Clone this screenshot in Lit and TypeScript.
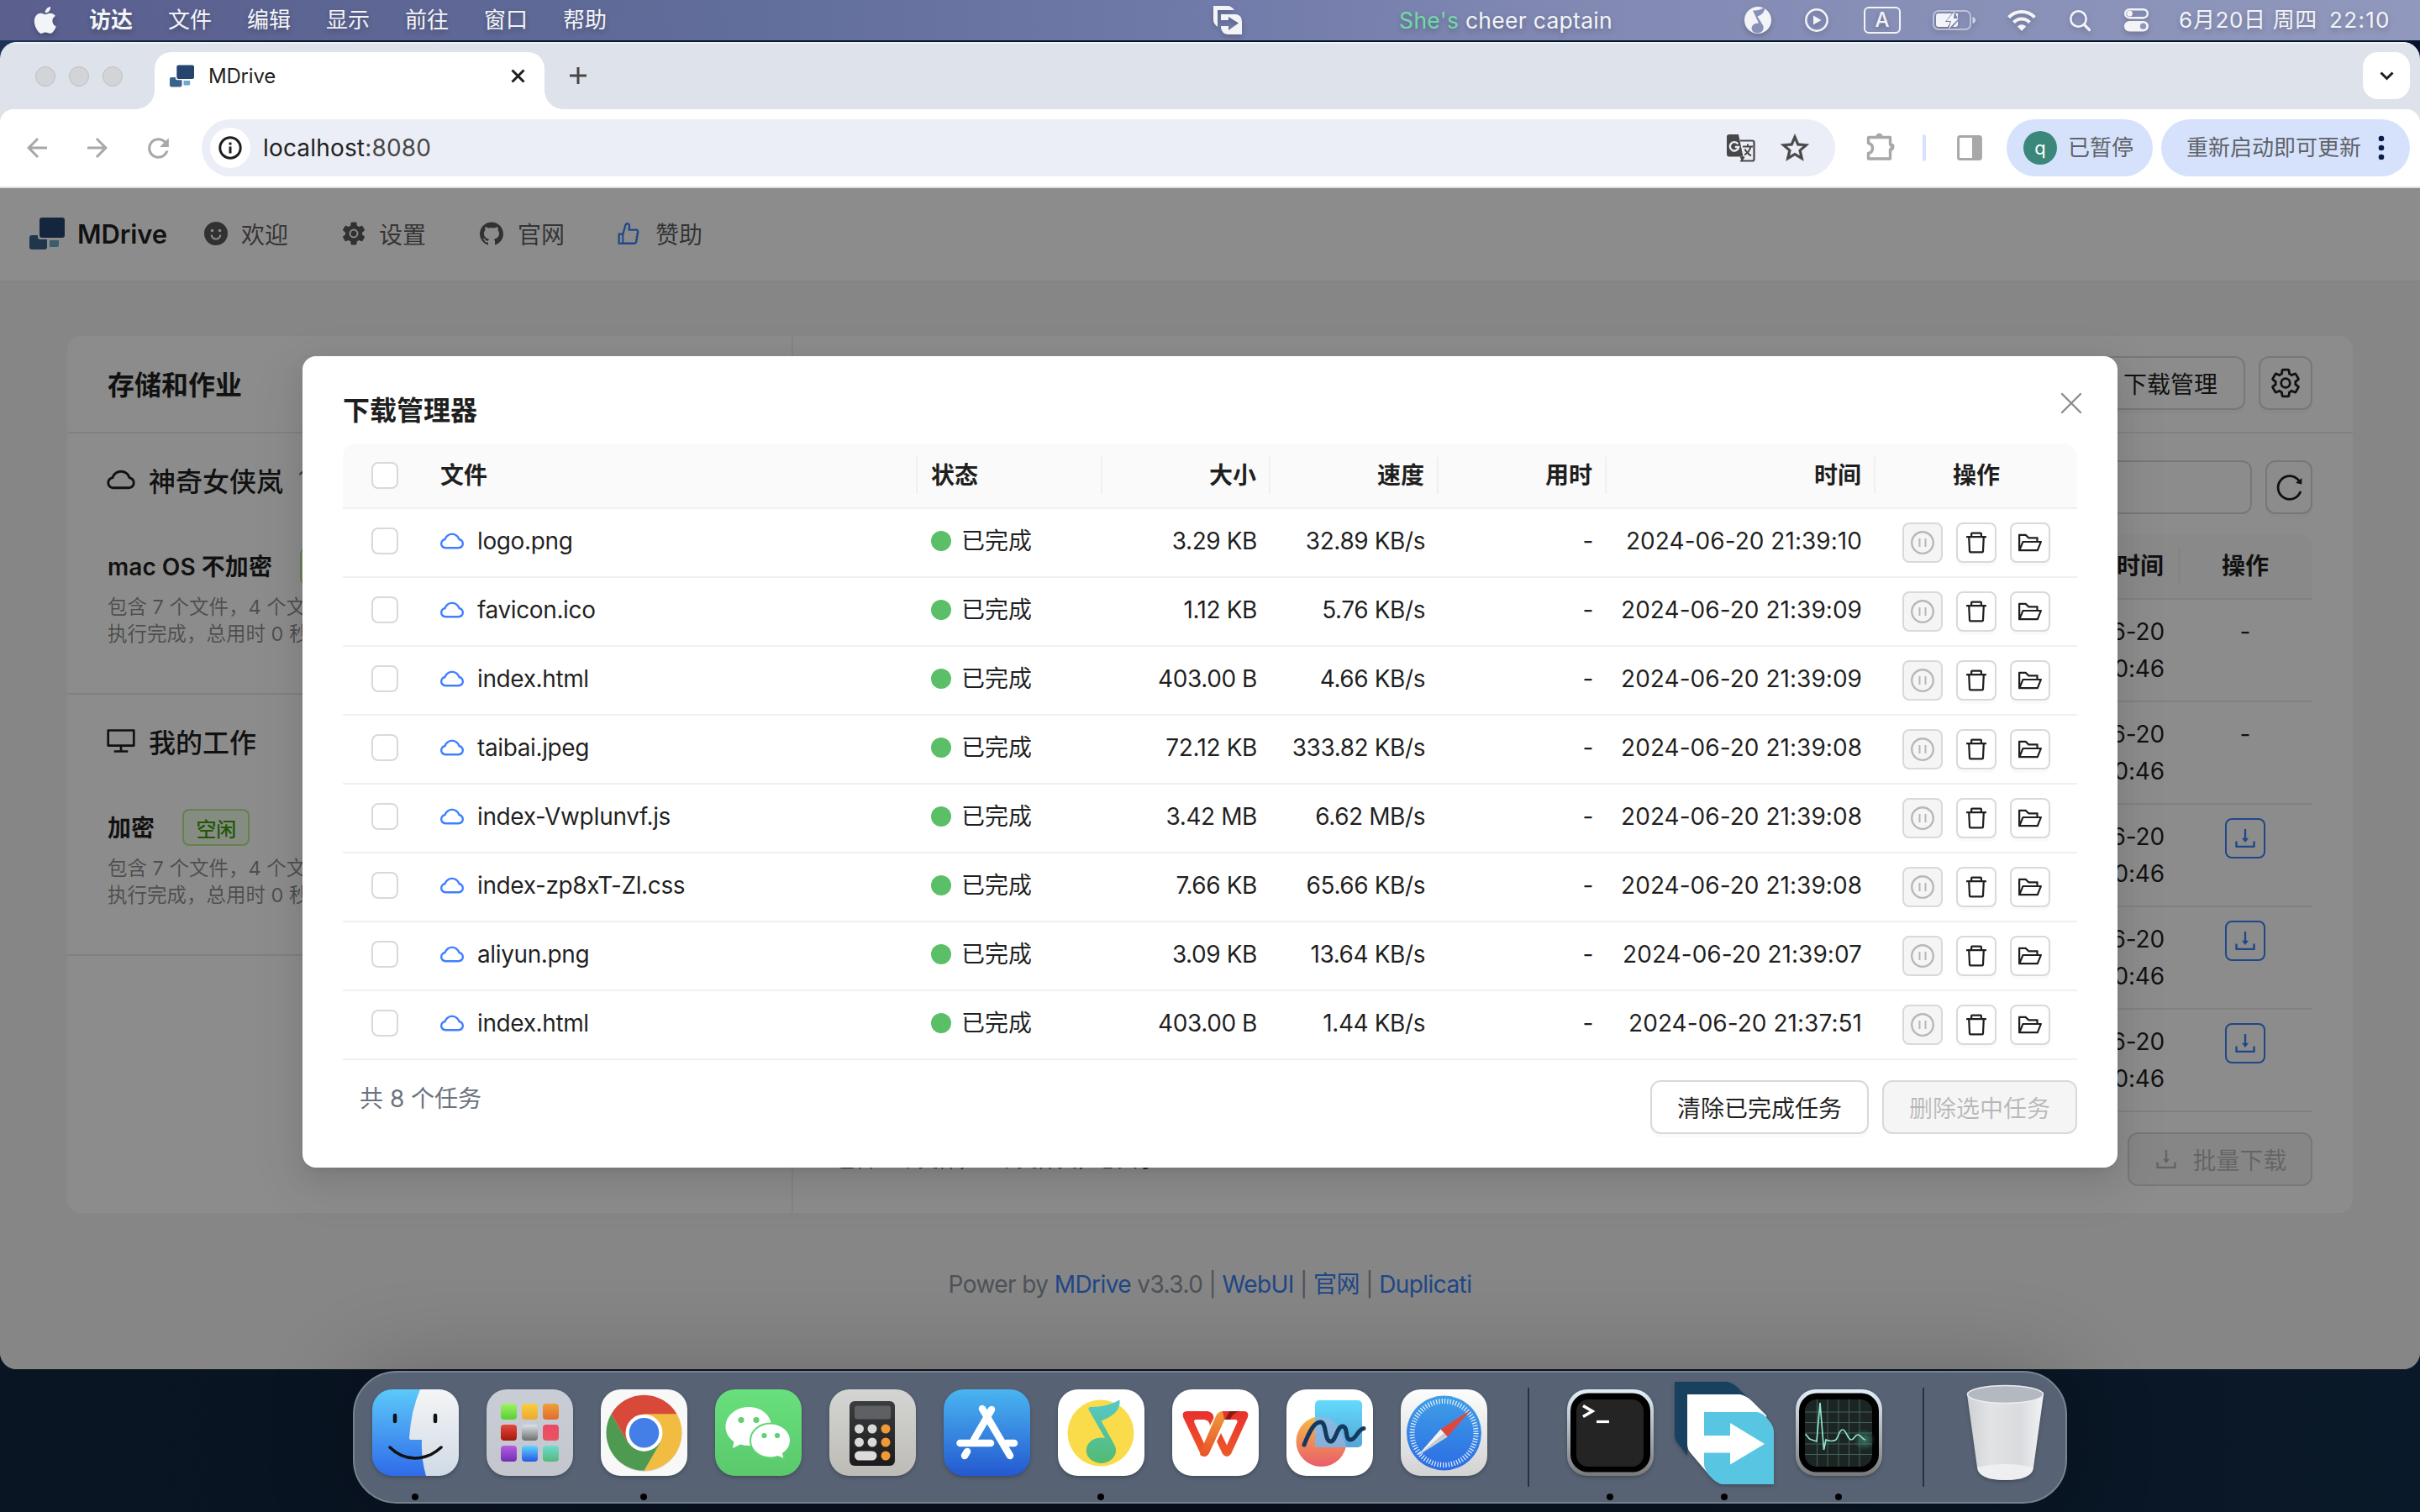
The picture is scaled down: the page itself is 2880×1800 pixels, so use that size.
import { LitElement, html, css, svg, nothing } from "lit";
import { customElement } from "lit/decorators.js";
import { classMap } from "lit/directives/class-map.js";

const base = css`
  * { box-sizing: border-box; }
  :host { display: block; font-family: Inter, "Noto Sans CJK SC", sans-serif; }
  svg { display: block; flex: none; overflow: visible; }
`;

/* Outline icons on a 1024 grid */
const P: Record<string, string> = {
  download: "M505.7 661a8 8 0 0012.6 0l112-141.7c4.1-5.2.4-12.9-6.3-12.9h-74.1V168c0-4.4-3.6-8-8-8h-60c-4.4 0-8 3.6-8 8v338.3H400c-6.7 0-10.4 7.7-6.3 12.9l112 141.8zM878 626h-60c-4.4 0-8 3.6-8 8v154H214V634c0-4.4-3.6-8-8-8h-60c-4.4 0-8 3.6-8 8v198c0 17.7 14.3 32 32 32h684c17.7 0 32-14.3 32-32V634c0-4.4-3.6-8-8-8z",
  trash: "M360 184h-8c4.4 0 8-3.6 8-8v8h304v-8c0 4.4 3.6 8 8 8h-8v72h72v-80c0-35.3-28.7-64-64-64H352c-35.3 0-64 28.7-64 64v80h72v-72zm504 72H160c-17.7 0-32 14.3-32 32v32c0 4.4 3.6 8 8 8h60.4l24.7 523c1.6 34.1 29.8 61 63.9 61h454c34.2 0 62.3-26.8 63.9-61l24.7-523H888c4.4 0 8-3.6 8-8v-32c0-17.7-14.3-32-32-32zM731.3 840H292.7l-24.2-512h487l-24.2 512z",
  folder: "M928 444H820V330.4c0-17.7-14.3-32-32-32H473L355.7 186.2a8.15 8.15 0 00-5.5-2.2H96c-17.7 0-32 14.3-32 32v592c0 17.7 14.3 32 32 32h698c13 0 24.8-7.9 29.7-20l134-332c1.5-3.8 2.3-7.9 2.3-12 0-17.7-14.3-32-32-32zM136 256h188.5l119.6 114.4H748V444H238c-13 0-24.8 7.9-29.7 20L136 643.2V256zm635.3 512H159l103.3-256h612.4L771.3 768z",
  pause: "M512 64C264.6 64 64 264.6 64 512s200.6 448 448 448 448-200.6 448-448S759.4 64 512 64zm0 820c-205.4 0-372-166.6-372-372s166.6-372 372-372 372 166.6 372 372-166.6 372-372 372zm-88-532h-48c-4.4 0-8 3.6-8 8v304c0 4.4 3.6 8 8 8h48c4.4 0 8-3.6 8-8V360c0-4.4-3.6-8-8-8zm224 0h-48c-4.4 0-8 3.6-8 8v304c0 4.4 3.6 8 8 8h48c4.4 0 8-3.6 8-8V360c0-4.4-3.6-8-8-8z",
  reload: "M909.1 209.3l-56.4 44.1C775.8 155.1 656.2 92 521.9 92 290 92 102.3 279.5 102 511.5 101.7 743.7 289.8 932 521.9 932c181.3 0 335.8-115 394.6-276.1 1.5-4.2-.7-8.9-4.9-10.3l-56.7-19.5a8 8 0 00-10.1 4.8c-1.8 5-3.8 10-5.9 14.9-17.3 41-42.1 77.8-73.7 109.4A344.77 344.77 0 01655.9 829c-42.3 17.9-87.4 27-133.8 27-46.5 0-91.5-9.1-133.8-27A341.5 341.5 0 01279 755.2a342.16 342.16 0 01-73.7-109.4c-17.9-42.4-27-87.4-27-133.9s9.1-91.5 27-133.9c17.3-41 42.1-77.8 73.7-109.4 31.6-31.6 68.4-56.4 109.3-73.8 42.3-17.9 87.4-27 133.8-27 46.5 0 91.5 9.1 133.8 27a341.5 341.5 0 01109.3 73.8c9.9 9.9 19.2 20.4 27.8 31.4l-60.2 47a8 8 0 003 14.1l175.6 43c5 1.2 9.9-2.6 9.9-7.7l.8-180.9c-.1-6.6-7.8-10.3-13-6.2z",
  github: "M511.6 76.3C264.3 76.2 64 276.4 64 523.5 64 718.9 189.3 885 363.8 946c23.5 5.9 19.9-10.8 19.9-22.2v-77.5c-135.7 15.9-141.2-73.9-150.3-88.9C215 726 171.5 718 184.5 703c30.9-15.9 62.4 4 98.9 57.9 26.4 39.1 77.9 32.5 104 26 5.7-23.5 17.9-44.5 34.7-60.8-140.6-25.2-199.2-111-199.2-213 0-49.5 16.3-95 48.3-131.7-20.4-60.5 1.9-112.3 4.9-120 58.1-5.2 118.5 41.6 123.2 45.3 33-8.9 70.7-13.6 112.9-13.6 42.4 0 80.2 4.9 113.5 13.9 11.3-8.6 67.3-48.8 121.3-43.9 2.9 7.7 24.7 58.3 5.5 118 32.4 36.8 48.9 82.7 48.9 132.3 0 102.2-59 188.1-200 212.9a127.5 127.5 0 0138.1 91v112.5c.8 9 0 17.9 15 17.9 177.1-59.7 304.6-227 304.6-424.1 0-247.2-200.4-447.3-447.5-447.3z",
  like: "M885.9 533.7c16.8-22.2 26.1-49.4 26.1-77.7 0-44.9-25.1-87.4-65.5-111.1a67.67 67.67 0 00-34.3-9.3H572.4l6-122.9c1.4-29.7-9.1-57.9-29.5-79.4A106.62 106.62 0 00471 99.9c-52 0-98 35-111.8 85.1l-85.9 311H144c-17.7 0-32 14.3-32 32v364c0 17.7 14.3 32 32 32h601.3c9.2 0 18.2-1.8 26.5-5.4 47.6-20.3 78.3-66.8 78.3-118.4 0-12.6-1.8-25-5.4-37 16.8-22.2 26.1-49.4 26.1-77.7 0-12.6-1.8-25-5.4-37 16.8-22.2 26.1-49.4 26.1-77.7-.2-12.6-2-25.1-5.6-37.1zM184 852V568h81v284h-81zm636.4-353l-21.9 19 13.9 25.4a56.2 56.2 0 016.9 27.3c0 16.5-7.2 32.2-19.6 43l-21.9 19 13.9 25.4a56.2 56.2 0 016.9 27.3c0 16.5-7.2 32.2-19.6 43l-21.9 19 13.9 25.4a56.2 56.2 0 016.9 27.3c0 22.4-13.2 42.6-33.6 51.8H329V564.8l99.5-360.5a44.1 44.1 0 0142.2-32.3c7.6 0 15.1 2.2 21.1 6.7 9.9 7.4 15.2 18.6 14.6 30.5l-9.6 198.4h314.4C829 418.5 840 436.9 840 456c0 16.5-7.2 32.1-19.6 43z",
  cloud: "M811.4 418.7C765.6 297.9 648.9 212 512.2 212S258.8 297.8 213 418.6C127.3 441.1 64 519.1 64 612c0 110.5 89.5 200 199.9 200h496.2C870.5 812 960 722.5 960 612c0-92.7-63.1-170.7-148.6-193.3zm36.3 281a123.07 123.07 0 01-87.6 36.3H263.9c-33.1 0-64.2-12.9-87.6-36.3A123.3 123.3 0 01140 612c0-28 9.1-54.3 26.2-76.3a125.7 125.7 0 0166.1-43.7l37.9-9.9 13.9-36.6c8.6-22.8 20.6-44.1 35.7-63.4a245.6 245.6 0 0152.4-49.9c41.1-28.9 89.5-44.2 140-44.2s98.9 15.3 140 44.2c19.9 14 37.5 30.8 52.4 49.9 15.1 19.3 27.1 40.7 35.7 63.4l13.8 36.5 37.8 10c54.3 14.5 92.1 63.8 92.1 120 0 33.1-12.9 64.3-36.3 87.7z",
  desktop: "M928 140H96c-17.7 0-32 14.3-32 32v496c0 17.7 14.3 32 32 32h380v112H304c-8.8 0-16 7.2-16 16v48c0 4.4 3.6 8 8 8h432c4.4 0 8-3.6 8-8v-48c0-8.8-7.2-16-16-16H548V700h380c17.7 0 32-14.3 32-32V172c0-17.7-14.3-32-32-32zm-40 488H136V212h752v416z",
};
const ant = (name: string, size: number) =>
  html`<svg width=${size} height=${size} viewBox="0 0 1024 1024" fill="currentColor"><path d=${P[name]}></path></svg>`;

const GEAR = "M19.14 12.94c.04-.3.06-.61.06-.94 0-.32-.02-.64-.07-.94l2.03-1.58c.18-.14.23-.41.12-.61l-1.92-3.32c-.12-.22-.37-.29-.59-.22l-2.39.96c-.5-.38-1.03-.7-1.62-.94l-.36-2.54c-.04-.24-.24-.41-.48-.41h-3.84c-.24 0-.43.17-.47.41l-.36 2.54c-.59.24-1.13.57-1.62.94l-2.39-.96c-.22-.08-.47 0-.59.22L2.74 8.87c-.12.21-.08.47.12.61l2.03 1.58c-.05.3-.09.63-.09.94s.02.64.07.94l-2.03 1.58c-.18.14-.23.41-.12.61l1.92 3.32c.12.22.37.29.59.22l2.39-.96c.5.38 1.03.7 1.62.94l.36 2.54c.05.24.24.41.48.41h3.84c.24 0 .44-.17.47-.41l.36-2.54c.59-.24 1.13-.56 1.62-.94l2.39.96c.22.08.47 0 .59-.22l1.92-3.32c.12-.22.07-.47-.12-.61l-2.01-1.58z";

const logo = (w: number, h: number) => html`
  <svg width=${w} height=${h} viewBox="0 0 42 38">
    <rect x="12" y="0" width="30" height="24" rx="3" fill="#25456f"></rect>
    <path d="M0 24a3 3 0 0 1 3-3h7v2a3 3 0 0 0 3 3h8v9a3 3 0 0 1-3 3H3a3 3 0 0 1-3-3z" fill="#3a638c"></path>
    <path d="M24 27h11v6a2 2 0 0 1-2 2h-9z" fill="#6fa8cc"></path>
  </svg>`;

@customElement("menu-bar")
class MenuBar extends LitElement {
  static styles = [base, css`
    .bar {
      height: 48px; display: flex; align-items: center; padding: 0 0 0 40px; color: #f3f4f8; font-size: 26px; white-space: nowrap;
      background: linear-gradient(90deg, #5a5f8e, #616d9a 31%, #707aa8 49%, #828ab4 66%, #9198bd);
      text-shadow: 0 3px 6px rgba(0, 0, 0, .25); line-height: 40px;
    }
    svg { filter: drop-shadow(0 3px 3px rgba(0, 0, 0, .2)); }
    .menus { display: flex; gap: 42px; margin-left: 39px; }
    .menus b { font-weight: 700; }
    .lyric { margin-left: 187px; width: 254px; font-size: 26.5px; letter-spacing: .28px; }
    .lyric i { font-style: normal; color: #6fdca6; }
    .right { display: flex; align-items: center; margin-left: 157px; }
    .push { margin-left: 722px; }
    .letter { width: 44px; height: 32px; border: 2.5px solid #f3f4f8; border-radius: 6px; display: grid; place-items: center; font-size: 24px; font-weight: 500; line-height: 1; margin: 0 38px 0 42px; }
    .date { margin-left: 36px; width: 179px; letter-spacing: .65px; }
    .time { letter-spacing: 1.3px; }
  `];
  render() {
    return html`<div class="bar">
      <svg width="27" height="32" viewBox="1.6 0 20.4 24" fill="currentColor"><path d="M12.152 6.896c-.948 0-2.415-1.078-3.96-1.04-2.04.027-3.91 1.183-4.961 3.014-2.117 3.675-.546 9.103 1.519 12.09 1.013 1.454 2.208 3.09 3.792 3.039 1.52-.065 2.09-.987 3.935-.987 1.831 0 2.35.987 3.96.948 1.637-.026 2.676-1.48 3.676-2.948 1.156-1.688 1.636-3.325 1.662-3.415-.039-.013-3.182-1.221-3.22-4.857-.026-3.04 2.48-4.494 2.597-4.559-1.429-2.09-3.623-2.324-4.39-2.376-2-.156-3.675 1.09-4.61 1.09zM15.53 3.83c.843-1.012 1.4-2.427 1.245-3.83-1.207.052-2.662.805-3.532 1.818-.78.896-1.454 2.338-1.273 3.714 1.338.104 2.715-.688 3.559-1.701"></path></svg>
      <div class="menus"><b>访达</b>${["文件", "编辑", "显示", "前往", "窗口", "帮助"].map(t => html`<span>${t}</span>`)}</div>
      <svg class="push" width="34" height="34" viewBox="0 0 34 34" fill="currentColor">
        <path d="M0 0H17Q21 0 25 5H5V25Q0 21 0 17Z"></path>
        <path fill-rule="evenodd" d="M9 10H27Q34 11 34 19V34H17Q10 33 9 26V24H18V29L30 20.500 18 13V17H9Z"></path>
      </svg>
      <span class="lyric"><i>She's </i>cheer captain</span>
      <div class="right">
        <svg width="32" height="32" viewBox="0 0 32 32"><circle cx="16" cy="16" r="16" fill="#f3f4f8"></circle><path d="M10 4.500Q18 5 24 0.500 25 8 15.500 11.500L22.500 23Q24 30 16 31.500 8.500 31 8.500 25.500 9 19.500 17 19.500Z" fill="#8790b8"></path></svg>
        <svg width="28" height="28" viewBox="0 0 28 28" style="margin-left:40px"><circle cx="14" cy="14" r="12.700" fill="none" stroke="#f3f4f8" stroke-width="2.500"></circle><path d="M10 8.500v11l9.500-5.500z" fill="#f3f4f8"></path></svg>
        <span class="letter">A</span>
        <svg width="51" height="24" viewBox="0 0 51 24"><rect x="1" y="1" width="44" height="22" rx="6" fill="none" stroke="#d0d4e4" stroke-width="2" opacity=".75"></rect><path d="M47.500 8q3.500 1 3.500 4t-3.500 4z" fill="#d0d4e4"></path><path d="M7 4h16L15 14h6l-3 6H7q-3 0-3-3V7q0-3 3-3zM27 4h3v6zM24 20h3q3 0 3-3v-4z" fill="#f3f4f8"></path><path d="M26 1.500 16.500 13h5.500l-3 9.500L31 10h-6z" fill="#f3f4f8"></path></svg>
        <svg width="34" height="26" viewBox="0 0 34 26" style="margin-left:38px" fill="none" stroke="#f3f4f8" stroke-width="4.200"><path d="M1.600 9.600Q8 3 17 3t15.400 6.600"></path><path d="M7.500 15.600Q11.500 11.500 17 11.500t9.500 4.100"></path><path d="M17 26l-5.200-5.500q5.200-4.600 10.400 0z" fill="#f3f4f8" stroke="none"></path></svg>
        <svg width="25" height="25" viewBox="0 0 25 25" style="margin-left:40px" fill="none" stroke="#f3f4f8" stroke-width="2.600" stroke-linecap="round"><circle cx="10.500" cy="10.500" r="9.200"></circle><path d="M17.500 17.500l6 6" stroke-width="3.200"></path></svg>
        <svg width="29" height="28" viewBox="0 0 29 28" style="margin-left:40px"><rect x="1.200" y="1.200" width="26.600" height="10" rx="5" fill="none" stroke="#f3f4f8" stroke-width="2.400"></rect><circle cx="6.500" cy="6.200" r="3.400" fill="#f3f4f8"></circle><rect x="0" y="15" width="29" height="12.500" rx="6.200" fill="#f3f4f8"></rect><circle cx="22.500" cy="21.200" r="3.600" fill="#8f96bb"></circle></svg>
        <span class="date">6月20日 周四</span><span class="time">22:10</span>
      </div>
    </div>`;
  }
}

@customElement("browser-chrome")
class BrowserChrome extends LitElement {
  static styles = [base, css`
    .strip { height: 80px; background: #dee2ea; border-top: 2px solid #eef1f5; padding: 10px 12px 0 42px; display: flex; }
    .lights { display: flex; gap: 16px; margin-top: 17px; }
    .lights i { width: 24px; height: 24px; border-radius: 50%; background: #d2d4d7; border: 1px solid #bdbfc2; }
    .tab { position: relative; margin-left: 38px; width: 464px; height: 68px; border-radius: 20px 20px 0 0; background: #fff; display: flex; align-items: center; padding: 0 23px 11px 18px; color: #1f1f1f; font-size: 24px; }
    .tab::before, .tab::after { content: ""; position: absolute; bottom: 0; width: 22px; height: 22px; }
    .tab::before { left: -22px; background: radial-gradient(circle at 0 0, transparent 21.5px, #fff 22px); }
    .tab::after { right: -22px; background: radial-gradient(circle at 100% 0, transparent 21.5px, #fff 22px); }
    .name { margin: -1px 0 0 17px; flex: 1; letter-spacing: -.2px; }
    .plus { margin: 18px 0 0 30px; }
    .drop { margin-left: auto; width: 56px; height: 56px; border-radius: 18px; background: #fff; display: grid; place-items: center; }
    .cap { background: #dee2ea; }
    .tools { height: 92px; background: #fff; border-radius: 16px 16px 0 0; display: flex; align-items: center; padding: 0 12px 0 26px; color: #a8a8a8; }
    .url { flex: none; margin-left: 33px; width: 1944px; height: 68px; border-radius: 34px; background: #ebeef6; display: flex; align-items: center; padding: 0 30px 0 10px; color: #474747; font-size: 28px; }
    .info { width: 48px; height: 48px; border-radius: 50%; background: #fff; display: grid; place-items: center; color: #1f1f1f; }
    .addr { margin-left: 15px; flex: 1; letter-spacing: .17px; }
    .addr b { font-weight: 400; color: #1f1f1f; }
    .tr { margin-right: 29px; }
    .sep { width: 4px; height: 32px; border-radius: 2px; background: #d6e2fb; margin: 0 37px 0 33px; }
    .chip { flex: none; height: 68px; border-radius: 34px; background: #d6e2fb; display: flex; align-items: center; font-size: 26px; color: #5f6368; line-height: 1; white-space: nowrap; }
    .paused { width: 174px; margin-left: 29px; padding-left: 20px; gap: 13px; }
    .avatar { width: 40px; height: 40px; border-radius: 50%; background: #3b877a; color: #fff; display: grid; place-items: center; font-size: 22px; }
    .restart { width: 296px; margin-left: 10px; padding-left: 30px; gap: 20px; }
    .tabs-line { height: 2px; background: #e0e0e0; }
  `];
  render() {
    return html`
      <div class="strip">
        <div class="lights"><i></i><i></i><i></i></div>
        <div class="tab">${logo(29, 27)}<span class="name">MDrive</span>
          <svg width="17" height="17" viewBox="0 0 17 17" stroke="#1f1f1f" stroke-width="3"><path d="M1.500 1.500l14 14M15.500 1.500l-14 14"></path></svg>
        </div>
        <svg class="plus" width="20" height="20" viewBox="0 0 20 20" stroke="#474747" stroke-width="3"><path d="M10 0v20M0 10h20"></path></svg>
        <div class="drop"><svg width="17" height="11" viewBox="0 0 17 11" fill="none" stroke="#1f1f1f" stroke-width="3"><path d="M1.500 1.500l7 7 7-7"></path></svg></div>
      </div>
      <div class="cap"><div class="tools">
        <svg width="36" height="36" viewBox="0 0 24 24" fill="currentColor"><path d="M20 11H7.830l5.590-5.590L12 4l-8 8 8 8 1.410-1.410L7.830 13H20v-2z"></path></svg>
        <svg width="36" height="36" viewBox="0 0 24 24" fill="currentColor" style="margin-left:36px"><path d="M4 11h12.170l-5.590-5.590L12 4l8 8-8 8-1.410-1.410L16.170 13H4v-2z"></path></svg>
        <svg width="37" height="37" viewBox="0 0 24 24" fill="currentColor" style="margin-left:36px"><path d="M17.650 6.350C16.200 4.900 14.210 4 12 4c-4.420 0-7.990 3.580-7.990 8s3.570 8 7.990 8c3.730 0 6.840-2.550 7.730-6h-2.080c-.82 2.330-3.040 4-5.650 4-3.310 0-6-2.690-6-6s2.690-6 6-6c1.660 0 3.140.69 4.220 1.780L13 11h7V4l-2.350 2.350z"></path></svg>
        <div class="url">
          <div class="info"><svg width="28" height="28" viewBox="0 0 28 28" fill="none" stroke="currentColor" stroke-width="3"><circle cx="14" cy="14" r="12.200"></circle><path d="M14 12.500v8M14 7.500v3"></path></svg></div>
          <span class="addr"><b>localhost</b>:8080</span>
          <svg class="tr" width="34" height="33" viewBox="0 0 34 33"><path d="M16 7.500h14.500a2 2 0 0 1 2 2v20a2 2 0 0 1-2 2H17.500l3-5" fill="none" stroke="#474747" stroke-width="2.200"></path><path d="M3 0h11l5.500 26.500H3a3 3 0 0 1-3-3V3a3 3 0 0 1 3-3z" fill="#474747"></path><path d="M15.500 26.500h4.500l-2 5z" fill="#474747"></path><path d="M19 14.500h12M25 11.500v3M21 24.500q6-3.500 7.500-10M21.500 17.500q2 4.500 7.500 8" fill="none" stroke="#474747" stroke-width="2"></path><path d="M13.300 11.300a5.200 5.200 0 1 0 .9 3.700H9.800" fill="none" stroke="#ebeef6" stroke-width="2.400"></path></svg>
          <svg width="36" height="36" viewBox="1.200 1 21.600 21.600" fill="currentColor"><path d="M22 9.240l-7.190-.62L12 2 9.190 8.630 2 9.240l5.460 4.730L5.820 21 12 17.270 18.180 21l-1.630-7.030L22 9.240zM12 15.400l-3.760 2.270 1-4.280-3.320-2.880 4.380-.38L12 6.100l1.710 4.040 4.380.38-3.320 2.880 1 4.280L12 15.400z" stroke="currentColor" stroke-width=".35"></path></svg>
        </div>
        <svg width="34" height="34" viewBox="0 0 34 34" style="margin:-4px 0 0 37px"><path d="M3 6.500H28.500V15q5 0 3 4.500-1 1.500-3 1.500v11H2.500V25.500q5-1 5-6t-5-6V7z" fill="none" stroke="currentColor" stroke-width="3.400" stroke-linejoin="round"></path><path d="M11 7a4.500 5.500 0 0 1 9 0zM28.500 14a4.500 4.500 0 0 1 0 9z" fill="currentColor"></path></svg>
        <i class="sep"></i>
        <svg width="30" height="30" viewBox="0 0 30 30"><rect x="1.600" y="1.600" width="26.800" height="26.800" rx="2" fill="none" stroke="currentColor" stroke-width="3"></rect><path d="M18 1h11v28H18z" fill="currentColor"></path></svg>
        <div class="chip paused"><span class="avatar">q</span>已暂停</div>
        <div class="chip restart">重新启动即可更新<svg width="8" height="30" viewBox="0 0 8 30" fill="#0b1d4d"><circle cx="4" cy="4" r="3.300"></circle><circle cx="4" cy="15" r="3.300"></circle><circle cx="4" cy="26" r="3.300"></circle></svg></div>
      </div></div>
      <div class="tabs-line"></div>`;
  }
}

@customElement("drive-page")
class DrivePage extends LitElement {
  static styles = [base, css`
    .page { height: 1406px; background: #f5f5f5; color: rgba(0, 0, 0, .88); font-size: 28px; }
    header { height: 112px; background: #fff; border-bottom: 2px solid #f0f0f0; display: flex; align-items: center; padding: 0 0 2px 35px; color: rgba(0, 0, 0, .65); }
    .brand { display: flex; align-items: center; gap: 15px; font-size: 31px; font-weight: 600; color: rgba(0, 0, 0, .88); letter-spacing: -.1px; width: 208px; }
    nav { display: flex; gap: 64px; }
    nav span { display: flex; align-items: center; gap: 16px; width: 100px; white-space: nowrap; }
    .git { margin: 0 -1px 0 -2px; }
    .blue { color: #3b82f6; margin-left: -3px; }
    .card { margin: 64px 80px 0; height: 1044px; background: #fff; border-radius: 16px; display: grid; grid-template-columns: 864px 1fr; overflow: hidden; }
    .left { border-right: 2px solid #f0f0f0; }
    .head { height: 116px; border-bottom: 2px solid #ebebeb; display: flex; align-items: center; font-size: 32px; font-weight: 600; padding: 0 0 3px 48px; }
    .job { height: 311px; border-bottom: 2px solid #e5e7f5; padding: 31px 0 0 48px; white-space: nowrap; }
    .store { display: flex; align-items: center; gap: 14px; font-size: 32px; font-weight: 500; height: 48px; }
    .store svg { margin-left: -3px; }
    .store small { font-size: 28px; color: #6b7280; font-weight: 400; margin-left: 4px; }
    .title { display: flex; align-items: center; height: 44px; margin-top: 56px; font-weight: 600; letter-spacing: .05px; }
    .tag { margin-left: 33px; height: 44px; border: 2px solid #b7eb8f; background: #f6ffed; color: #389e0d; border-radius: 8px; font-size: 24px; font-weight: 500; padding: 0 14.500px; display: flex; align-items: center; letter-spacing: -.4px; position: relative; top: 1px; }
    .desc { font-size: 23.5px; line-height: 32px; color: rgba(0, 0, 0, .45); margin-top: 12px; }
    .rhead { height: 116px; border-bottom: 2px solid #ebebeb; display: flex; align-items: center; justify-content: flex-end; gap: 16px; padding: 0 48px 2px 0; }
    .btn { height: 64px; border: 2px solid #d9d9d9; border-radius: 12px; background: #fff; display: flex; align-items: center; justify-content: center; padding: 0 31px 1px; box-shadow: 0 4px 0 rgba(0, 0, 0, .02); white-space: nowrap; }
    .sq { width: 64px; padding: 0; }
    .filter { display: flex; justify-content: flex-end; gap: 16px; padding: 32px 48px 24px 0; }
    .input { width: 600px; height: 64px; border: 2px solid #d9d9d9; border-radius: 12px; }
    .filter .sq { width: 56px; }
    .table { margin: 0 48px; }
    .tr { display: grid; grid-template-columns: 1fr 160px; height: 122px; border-bottom: 2px solid #ebebeb; line-height: 44px; padding-top: 16px; text-align: right; }
    .th { background: #fafafa; border-radius: 16px 16px 0 0; height: 78px; align-items: center; padding: 0; font-weight: 600; line-height: 44px; }
    .th .op { border-left: 2px solid #f0f0f0; padding-right: 2px; }
    .th .when { padding-right: 17px; letter-spacing: 0; }
    .when { padding-right: 16px; letter-spacing: -.15px; }
    .op { text-align: center; display: flex; justify-content: center; align-items: flex-start; }
    .dl { width: 48px; height: 48px; border: 2px solid #3b82f6; border-radius: 8px; color: #3b82f6; display: grid; place-items: center; }
    .foot { display: flex; justify-content: space-between; align-items: flex-start; padding: 24px 48px 0 50px; }
    .sum { font-size: 24px; color: #374151; padding-top: 13px; letter-spacing: -.1px; }
    .batch { color: rgba(0, 0, 0, .25); background: #f5f5f5; gap: 15px; box-shadow: none; width: 220px; padding: 0 0 1px; }
    footer { text-align: center; margin-top: 64px; line-height: 42px; color: #8f95a1; letter-spacing: -.58px; }
    footer a { color: #3b82f6; }
  `];
  job(icon: string, name: string, count: string, title: string) {
    return html`<section class="job">
      <div class="store">${ant(icon, 38)}<span>${name}</span>${count ? html`<small>${count}</small>` : nothing}</div>
      <div class="title">${title}<span class="tag">空闲</span></div>
      <div class="desc">包含 7 个文件，4 个文件夹<br>执行完成，总用时 0 秒</div>
    </section>`;
  }
  render() {
    return html`<div class="page">
      <header>
        <div class="brand">${logo(42, 38)}MDrive</div>
        <nav>
          <span><svg width="28" height="28" viewBox="0 0 28 28"><circle cx="14" cy="14" r="14" fill="currentColor"></circle><circle cx="9.500" cy="10.500" r="1.800" fill="#fff"></circle><circle cx="18.500" cy="10.500" r="1.800" fill="#fff"></circle><path d="M8.500 15.500q1 5 5.500 5t5.500-5" fill="none" stroke="#fff" stroke-width="2"></path></svg>欢迎</span>
          <span><svg width="28" height="28" viewBox="2 2 20 20"><path d=${GEAR} fill="currentColor"></path><circle cx="12" cy="12" r="3.200" fill="none" stroke="#fff" stroke-width="1.400"></circle></svg>设置</span>
          <span><i class="git">${ant("github", 32)}</i>官网</span>
          <span><i class="blue">${ant("like", 32)}</i>赞助</span>
        </nav>
      </header>
      <div class="card">
        <div class="left">
          <div class="head">存储和作业</div>
          ${this.job("cloud", "神奇女侠岚", "1", "mac OS 不加密")}
          ${this.job("desktop", "我的工作", "", "加密")}
        </div>
        <div class="rightcol">
          <div class="rhead">
            <div class="btn">下载管理</div>
            <div class="btn sq"><svg width="34" height="34" viewBox="1.700 1.700 20.600 20.600" fill="none" stroke="currentColor" stroke-width="1.700"><path d=${GEAR}></path><circle cx="12" cy="12" r="3.200"></circle></svg></div>
          </div>
          <div class="filter"><div class="input"></div><div class="btn sq">${ant("reload", 37)}</div></div>
          <div class="table">
            <div class="tr th"><span class="when">时间</span><span class="op">操作</span></div>
            ${[0, 0, 1, 1, 1].map(d => html`<div class="tr"><span class="when">2024-06-20<br>21:30:46</span><span class="op">${d ? html`<i class="dl">${ant("download", 32)}</i>` : "-"}</span></div>`)}
          </div>
          <div class="foot"><span class="sum">包含 7 个文件，4 个文件夹，总大小</span><div class="btn batch">${ant("download", 32)}批量下载</div></div>
        </div>
      </div>
      <footer>Power by <a>MDrive</a> v3.3.0 | <a>WebUI</a> | <a>官网</a> | <a>Duplicati</a></footer>
    </div>`;
  }
}

const FILES: [string, string, string, string][] = [
  ["logo.png", "3.29 KB", "32.89 KB/s", "2024-06-20 21:39:10"],
  ["favicon.ico", "1.12 KB", "5.76 KB/s", "2024-06-20 21:39:09"],
  ["index.html", "403.00 B", "4.66 KB/s", "2024-06-20 21:39:09"],
  ["taibai.jpeg", "72.12 KB", "333.82 KB/s", "2024-06-20 21:39:08"],
  ["index-VwpIunvf.js", "3.42 MB", "6.62 MB/s", "2024-06-20 21:39:08"],
  ["index-zp8xT-Zl.css", "7.66 KB", "65.66 KB/s", "2024-06-20 21:39:08"],
  ["aliyun.png", "3.09 KB", "13.64 KB/s", "2024-06-20 21:39:07"],
  ["index.html", "403.00 B", "1.44 KB/s", "2024-06-20 21:37:51"],
];

@customElement("download-manager")
class DownloadManager extends LitElement {
  static styles = [base, css`
    .modal { width: 2160px; height: 966px; border-radius: 16px; background: #fff; padding: 40px 48px; color: rgba(0, 0, 0, .88); font-size: 28px;
      box-shadow: 0 12px 32px rgba(0, 0, 0, .08), 0 6px 12px -8px rgba(0, 0, 0, .12), 0 18px 56px 16px rgba(0, 0, 0, .05); }
    .top { height: 64px; display: flex; justify-content: space-between; font-size: 32px; font-weight: 600; line-height: 50px; }
    .close { margin: 4px -5px 0 0; }
    .row { display: grid; grid-template-columns: 100px 584px 220px 200px 200px 200px 320px 240px; align-items: center; height: 82px; border-bottom: 2px solid #f0f0f0; white-space: nowrap; }
    .row > span { padding: 0 16px; display: flex; align-items: center; line-height: 44px; height: 44px; }
    .row:not(.th) > span { padding-bottom: 4px; }
    .num { justify-content: flex-end; letter-spacing: -.42px; }
    .when { justify-content: flex-end; letter-spacing: .04px; }
    .th .num, .th .when { letter-spacing: 0; }
    .th { height: 78px; background: #fafafa; border-radius: 16px 16px 0 0; font-weight: 600; }
    .th .div { border-right: 2px solid #f0f0f0; padding-right: 15px; }
    .check { width: 32px; height: 32px; border: 2px solid #d9d9d9; border-radius: 8px; background: #fff; margin-left: 18px; }
    .cloud { color: #4080ff; margin: 0 14px 0 -2px; }
    .fname { letter-spacing: -.38px; }
    .dot { width: 24px; height: 24px; border-radius: 50%; background: #5bbf67; margin-right: 12px; }
    .row:not(.th) > .ops { gap: 16px; justify-content: center; height: 48px; padding: 0; }
    .th .ops { justify-content: center; }
    .mini { width: 48px; height: 48px; border: 2px solid #d9d9d9; border-radius: 8px; display: grid; place-items: center; background: #fff; box-shadow: 0 4px 0 rgba(0, 0, 0, .02); }
    .off { background: #f5f5f5; color: rgba(0, 0, 0, .25); box-shadow: none; }
    .foot { display: flex; gap: 16px; padding-top: 24px; }
    .total { flex: 1; color: #6b7280; line-height: 45px; padding-left: 20px; }
    .btn { height: 64px; border: 2px solid #d9d9d9; border-radius: 12px; padding: 0 30px 1px; display: flex; align-items: center; background: #fff; box-shadow: 0 4px 0 rgba(0, 0, 0, .02); }
    .btn.off { background: #f5f5f5; box-shadow: none; }
  `];
  render() {
    const heads: [string, string][] = [["文件", "div"], ["状态", "div"], ["大小", "num div"], ["速度", "num div"], ["用时", "num div"], ["时间", "when div"], ["操作", "ops"]];
    return html`<div class="modal">
      <div class="top">下载管理器<svg class="close" width="24" height="24" viewBox="0 0 24 24" stroke="#8c8c8c" stroke-width="2.400" stroke-linecap="round"><path d="M1 1l22 22M23 1L1 23"></path></svg></div>
      <div class="row th"><span><i class="check"></i></span>${heads.map(([t, c]) => html`<span class=${c}>${t}</span>`)}</div>
      ${FILES.map(([n, s, v, t]) => html`<div class="row">
        <span><i class="check"></i></span>
        <span><i class="cloud">${ant("cloud", 32)}</i><span class="fname">${n}</span></span>
        <span><i class="dot"></i>已完成</span>
        <span class="num">${s}</span><span class="num">${v}</span><span class="num">-</span><span class="when">${t}</span>
        <span class="ops">${["pause", "trash", "folder"].map(i => html`<i class=${classMap({ mini: true, off: i === "pause" })}>${ant(i, 32)}</i>`)}</span>
      </div>`)}
      <div class="foot"><span class="total">共 8 个任务</span><div class="btn">清除已完成任务</div><div class="btn off">删除选中任务</div></div>
    </div>`;
  }
}

const tile = (fill: string) => svg`<rect width="103" height="103" rx="24" fill=${fill}></rect>`;
const grad = (id: string, a: string, b: string) => svg`<linearGradient id=${id} x1="0" y1="0" x2="0" y2="1"><stop offset="0" stop-color=${a}></stop><stop offset="1" stop-color=${b}></stop></linearGradient>`;
const frame = svg`<defs>${grad("fr", "#e3eff8", "#77797b")}</defs>${tile("url(#fr)")}<rect x="4" y="4.500" width="95" height="94" rx="21" fill="#000"></rect>`;

const finder = svg`<defs>${grad("fa", "#5cc9fa", "#2f6be9")}${grad("fb", "#f4f5f6", "#d0dae6")}<clipPath id="fc"><rect width="103" height="103" rx="24"></rect></clipPath></defs>
  <g clip-path="url(#fc)"><rect width="103" height="103" fill="url(#fa)"></rect><path d="M57 0Q46 26 44 58q0 2 2 2h13q-1 22 5 43h40V0z" fill="url(#fb)"></path></g>
  <g fill="none" stroke="#111" stroke-linecap="round"><path d="M27 31v7M75 31v7" stroke-width="4.500"></path><path d="M21 69Q34 82 51 82t31-13" stroke-width="3.500"></path></g>`;
const LP = [["#a0f264", "#57cf35"], ["#f8cf3f", "#eda832"], ["#f0a037", "#e06c2f"], ["#e5493a", "#a5170f"], ["#dbe3e6", "#6d6f70"], ["#ea4a66", "#e75560"], ["#b45fe2", "#7030b0"], ["#5fd5fc", "#2757e4"], ["#6fdcd0", "#54b877"]];
const launchpad = svg`<defs>${grad("lb", "#c9cdd6", "#c3c6cd")}${LP.map(([a, b], i) => grad("l" + i, a, b))}</defs>${tile("url(#lb)")}
  ${LP.map((_, i) => svg`<rect x=${17 + (i % 3) * 25} y=${17 + Math.floor(i / 3) * 25} width="19" height="19" rx="4" fill=${"url(#l" + i + ")"}></rect>`)}`;
const chromeIcon = svg`${tile("#f8f8f9")}<circle cx="51.500" cy="54" r="44" fill="#000" opacity=".12"></circle>
  <path d="M51.500 51.700 12.500 29.200A45 45 0 0 1 90.500 29.200z" fill="#d8493a"></path><path d="M51.500 29.200H90.500A45 45 0 0 1 51.500 96.700L71 63z" fill="#f2bb42"></path>
  <path d="M12.500 29.200A45 45 0 0 0 51.500 96.700L71 63 51.500 74 32 63z" fill="#4d9a50"></path><path d="M12.500 29.200 32 63 40 45 51.500 29.200z" fill="#d8493a"></path>
  <circle cx="51.500" cy="51.700" r="22" fill="#fff"></circle><circle cx="51.500" cy="51.700" r="17.800" fill="#437fe6"></circle>`;
const wechat = svg`<defs>${grad("wc", "#68e07c", "#5ac96d")}</defs>${tile("url(#wc)")}
  <path d="M40 21c-15 0-27.500 10.500-27.500 23.500 0 7.500 4 13.500 10 18L21 70l9-4.500q5 1.500 12 1.500 25-2 25-23C67 31 55 21 40 21z" fill="#fff"></path>
  <path d="M66 40.500c-13.500 0-24 9-24 20.500s10.500 20.500 24 20.500q5 0 9-1.500l7.500 3.500-1.500-7q9-6.500 9-15.500c0-11.500-10.500-20.500-24-20.500z" fill="#fff" stroke="#61d374" stroke-width="2"></path>
  <g fill="#5fd073"><circle cx="31" cy="36.500" r="3.600"></circle><circle cx="49" cy="36.500" r="3.600"></circle><circle cx="58.500" cy="55" r="3.100"></circle><circle cx="74" cy="55" r="3.100"></circle></g>`;
const calc = svg`<defs>${grad("ca", "#d4d5d3", "#bdbbb6")}${grad("cb", "#3a3c3e", "#1b1b1c")}</defs>${tile("url(#ca)")}
  <rect x="24" y="14" width="54" height="77" rx="6" fill="url(#cb)"></rect><rect x="30" y="19.500" width="43" height="16" rx="3" fill="#5e6164"></rect>
  ${[47, 63, 79].map(y => svg`<circle cx="67" cy=${y} r="5.500" fill="#f09a37"></circle>${y < 79 ? svg`<circle cx="35.500" cy=${y} r="5.500" fill="#d9dad8"></circle><circle cx="51" cy=${y} r="5.500" fill="#d9dad8"></circle>` : svg`<rect x="30" y="73.500" width="26.500" height="11" rx="5.500" fill="#dedcd8"></rect>`}`)}`;
const store = svg`<defs>${grad("as", "#4ab5f1", "#2459d0")}</defs>${tile("url(#as)")}
  <g stroke="#fff" stroke-width="8.500" stroke-linecap="round"><path d="M19.500 64H56M75 64h9"></path><path d="M46 23l33 56"></path><path d="M57 24L36 60"></path><path d="M28 74l-3 5"></path></g>`;
const music = svg`<defs>${grad("mu", "#55c9c9", "#54bb73")}</defs>${tile("#fff")}<circle cx="51" cy="52" r="39.500" fill="#fadc4b"></circle>
  <path d="M37 25q-2-4 2-4 20 0 34.500-8.500 2 16-22 25l15.500 28a17.700 15.200 0 1 1-11-7.500z" fill="url(#mu)"></path>`;
const wps = svg`<defs>${grad("wp", "#e8302e", "#ee5a29")}${grad("wo", "#f09a3c", "#ea5126")}</defs>${tile("#fff")}
  <path fill-rule="evenodd" d="M17 26H42Q49 27 49.500 34L45 43Q44 36.500 38 36H28Q25 36.500 26.500 40L38 64.500 40 76Q38 80 34.500 78.500L13 33Q11 27 17 26Z" fill="url(#wp)"></path>
  <path d="M33 78Q40 83 44 76L67 26H59Q54 27 52 32L38 64Z" fill="url(#wo)"></path>
  <path fill-rule="evenodd" d="M60 26H86Q92 27 90 33L70 77Q65 83 60 77L53 62 58 52 65 66.500 77.500 39Q78 36 75 36H62Z" fill="url(#wp)"></path>
  <path d="M68 26h12q-8 2-11 10H63z" fill="#8c1a12"></path>`;
const freeform = svg`<defs>${grad("ff", "#f5bb45", "#ea5c6c")}${grad("fg", "#62dbfd", "#56a4d6")}</defs>${tile("#fff")}
  <circle cx="41.500" cy="62" r="30" fill="url(#ff)"></circle><rect x="34" y="13" width="56" height="56" rx="5" fill="url(#fg)"></rect><path d="M34 69V33q30-4 37 36z" fill="#a5b4da" opacity=".6"></path>
  <path d="M21 66C28 48 34 38 41 39S45 61 52 62 60 43 67 44 69 60 76 60 85 47 92 46.500" fill="none" stroke="#15395d" stroke-width="5" stroke-linecap="round"></path>`;
const safari = svg`<defs>${grad("sb", "#fdfdfd", "#d2d2d2")}${grad("sa", "#3f9fe6", "#2c6ce4")}</defs>${tile("url(#sb)")}
  <circle cx="51.500" cy="52" r="44.500" fill="url(#sa)"></circle><circle cx="51.500" cy="52" r="38" fill="none" stroke="#e8f2fc" stroke-width="6" stroke-dasharray="1.200 2.120"></circle>
  <path d="M83.500 24.500 55.500 56.500 47.500 47.500z" fill="#e0473a"></path><path d="M20.500 78.500 47.500 47.500 55.500 56.500z" fill="#f4f4f4"></path><path d="M20.500 78.500 51.500 52 55.500 56.500z" fill="#c9ccd0"></path>`;
const terminal = svg`${frame}<rect x="11" y="12" width="80" height="80" rx="14" fill="#242424"></rect><path d="M19 19.500l11 6.500-11 6.500" fill="none" stroke="#fff" stroke-width="3.600"></path><path d="M35 38.500h15" stroke="#fff" stroke-width="3.200"></path>`;
const fdm = svg`<path d="M0 0H62Q70 1 76 8L90 22H15V88L6 76Q0 70 0 64Z" fill="#17415f"></path>
  <path d="M15 15H78Q86 17 92 23L109 40V90L42 112 20 86Q15 81 15 74Z" fill="#fff"></path>
  <path d="M35 36H98Q106 37 112 46 118 53 118 60V122H56Q48 120 41 111 35 104 35 98V84.500H66V98.500L107 74 66 49V64H35Z" fill="#58c6e2"></path>`;
const monitor = svg`<defs><radialGradient id="mg"><stop offset="0" stop-color="#4fae98" stop-opacity=".8"></stop><stop offset="1" stop-color="#4fae98" stop-opacity="0"></stop></radialGradient></defs>${frame}<rect x="11" y="12" width="80" height="80" rx="14" fill="#1c2523"></rect>
  <path d="M25.500 12v80M38 12v80M51 12v80M63.500 12v80M76 12v80M11 27h80M11 39.500h80M11 52h80M11 65h80M11 77.500h80" stroke="#4c7468" stroke-width="1" opacity=".75"></path>
  <circle cx="82" cy="60" r="13" fill="url(#mg)" opacity=".7"></circle><path d="M11.500 53l5 6q5 2 8.500 3L29 16l4.500 56L36 60q7 3 12 0c4-6 4-12 8-12s6 12 10 12 4-6 8-6 5 6 9 6" fill="none" stroke="#8fe3cc" stroke-width="1.700"></path>`;
const bin = svg`<defs><linearGradient id="tb"><stop offset="0" stop-color="#cfd1d4"></stop><stop offset=".3" stop-color="#e2e3e5"></stop><stop offset=".7" stop-color="#d9dbde"></stop><stop offset="1" stop-color="#f2f3f4"></stop></linearGradient></defs>
  <path d="M0 11L12 98Q14 113 45.500 113T79 98L91 11z" fill="url(#tb)"></path><path d="M12 98Q14 113 45.500 113T79 98Q45 90 12 98z" fill="#f3f3f4" opacity=".8"></path>
  <ellipse cx="45.500" cy="11" rx="45" ry="10.500" fill="#b4b8c0" stroke="#eceef0" stroke-width="1.500"></ellipse>`;

@customElement("mac-dock")
class MacDock extends LitElement {
  static styles = [base, css`
    .dock { width: 2040px; height: 158px; margin: 0 auto; border: 2px solid #78838f; border-radius: 52px; background: #576375; display: flex; padding: 0 4px; box-shadow: 0 0 110px rgba(0, 0, 0, .22); }
    .slot { width: 136px; padding-top: 20px; display: flex; flex-direction: column; align-items: center; }
    .icon { height: 103px; display: flex; align-items: center; }
    .icon svg { filter: drop-shadow(0 2px 2px rgba(0, 0, 0, .25)); }
    .run { width: 8px; height: 8px; border-radius: 50%; background: #000; margin-top: 21px; }
    .sep { width: 2px; height: 118px; background: #27313f; margin: 18px 28px 0 32px; }
  `];
  slotted(body: unknown, running = false, w = 103, h = 103) {
    return html`<div class="slot"><div class="icon"><svg width=${w} height=${h} viewBox="0 0 ${w} ${h}">${body}</svg></div>${running ? html`<i class="run"></i>` : nothing}</div>`;
  }
  render() {
    return html`<div class="dock">
      ${this.slotted(finder, true)}${this.slotted(launchpad)}${this.slotted(chromeIcon, true)}${this.slotted(wechat)}${this.slotted(calc)}
      ${this.slotted(store)}${this.slotted(music, true)}${this.slotted(wps)}${this.slotted(freeform)}${this.slotted(safari)}
      <i class="sep"></i>
      ${this.slotted(terminal, true)}${this.slotted(fdm, true, 118, 122)}${this.slotted(monitor, true)}
      <i class="sep"></i>
      ${this.slotted(bin, false, 91, 113)}
    </div>`;
  }
}

@customElement("app-root")
class AppRoot extends LitElement {
  static styles = [base, css`
    .desk { width: 2880px; height: 1800px; overflow: hidden; display: flex; flex-direction: column; gap: 2px;
      background: linear-gradient(90deg, #1c3357, #0a1730 12%, #05122b) 0 0 / 100% 120px no-repeat, linear-gradient(90deg, #0a1524, #07101c 50%, #0a1929); }
    .window { height: 1580px; border-radius: 20px; overflow: hidden; }
    .content { position: relative; }
    .mask { position: absolute; inset: 0; background: rgba(0, 0, 0, .45); display: flex; justify-content: center; padding-top: 200px; align-items: flex-start; }
    mac-dock { position: relative; }
  `];
  render() {
    return html`<div class="desk">
      <menu-bar></menu-bar>
      <div class="window">
        <browser-chrome></browser-chrome>
        <div class="content"><drive-page></drive-page><div class="mask"><download-manager></download-manager></div></div>
      </div>
      <mac-dock></mac-dock>
    </div>`;
  }
}
